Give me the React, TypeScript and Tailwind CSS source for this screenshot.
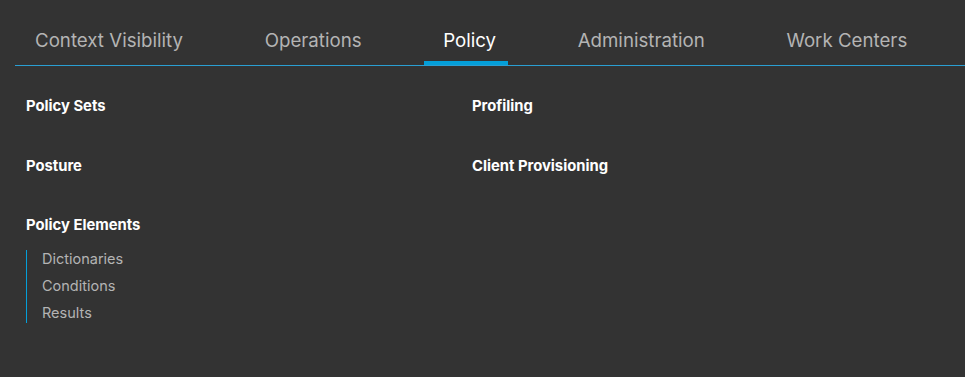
import React from "react";

const tabs = ["Context Visibility", "Operations", "Policy", "Administration", "Work Centers"];

export default function App() {
  return (
    <div
      className="w-[965px] h-[377px] bg-[#333333] overflow-hidden"
      style={{ fontFamily: "Inter, 'Noto Sans', sans-serif" }}
    >
      <div className="ml-[15px] h-[66px] border-b border-[#2a9fd3] flex items-start pl-[20px] pt-[29px] gap-[81.6px]">
        {tabs.map((t) => (
          <div
            key={t}
            className={
              "relative text-[18.7px] leading-[24px] whitespace-nowrap " +
              (t === "Policy" ? "text-white" : "text-[#b4b4b4]")
            }
          >
            {t}
            {t === "Policy" && (
              <div className="absolute left-[-19px] right-[-12px] top-[32px] h-[4px] bg-[#049fd9]" />
            )}
          </div>
        ))}
      </div>

      <div className="grid grid-cols-[446px_1fr] pl-[26px] pt-[30px]">
        <div className="flex flex-col">
          <div className="text-white font-bold text-[14.8px] leading-[20px]">Policy Sets</div>
          <div className="text-white font-bold text-[14.8px] leading-[20px] mt-[40px]">Posture</div>
          <div className="text-white font-bold text-[14.8px] leading-[20px] mt-[39px]">Policy Elements</div>
          <div className="mt-[15px] border-l border-[#049fd9] pl-[15px] flex flex-col gap-[9px] pb-[1px]">
            {["Dictionaries", "Conditions", "Results"].map((s) => (
              <div key={s} className="text-[#b4b4b4] text-[14.5px] leading-[18px]">
                {s}
              </div>
            ))}
          </div>
        </div>
        <div className="flex flex-col">
          <div className="text-white font-bold text-[14.8px] leading-[20px]">Profiling</div>
          <div className="text-white font-bold text-[14.8px] leading-[20px] mt-[40px]">Client Provisioning</div>
        </div>
      </div>
    </div>
  );
}
